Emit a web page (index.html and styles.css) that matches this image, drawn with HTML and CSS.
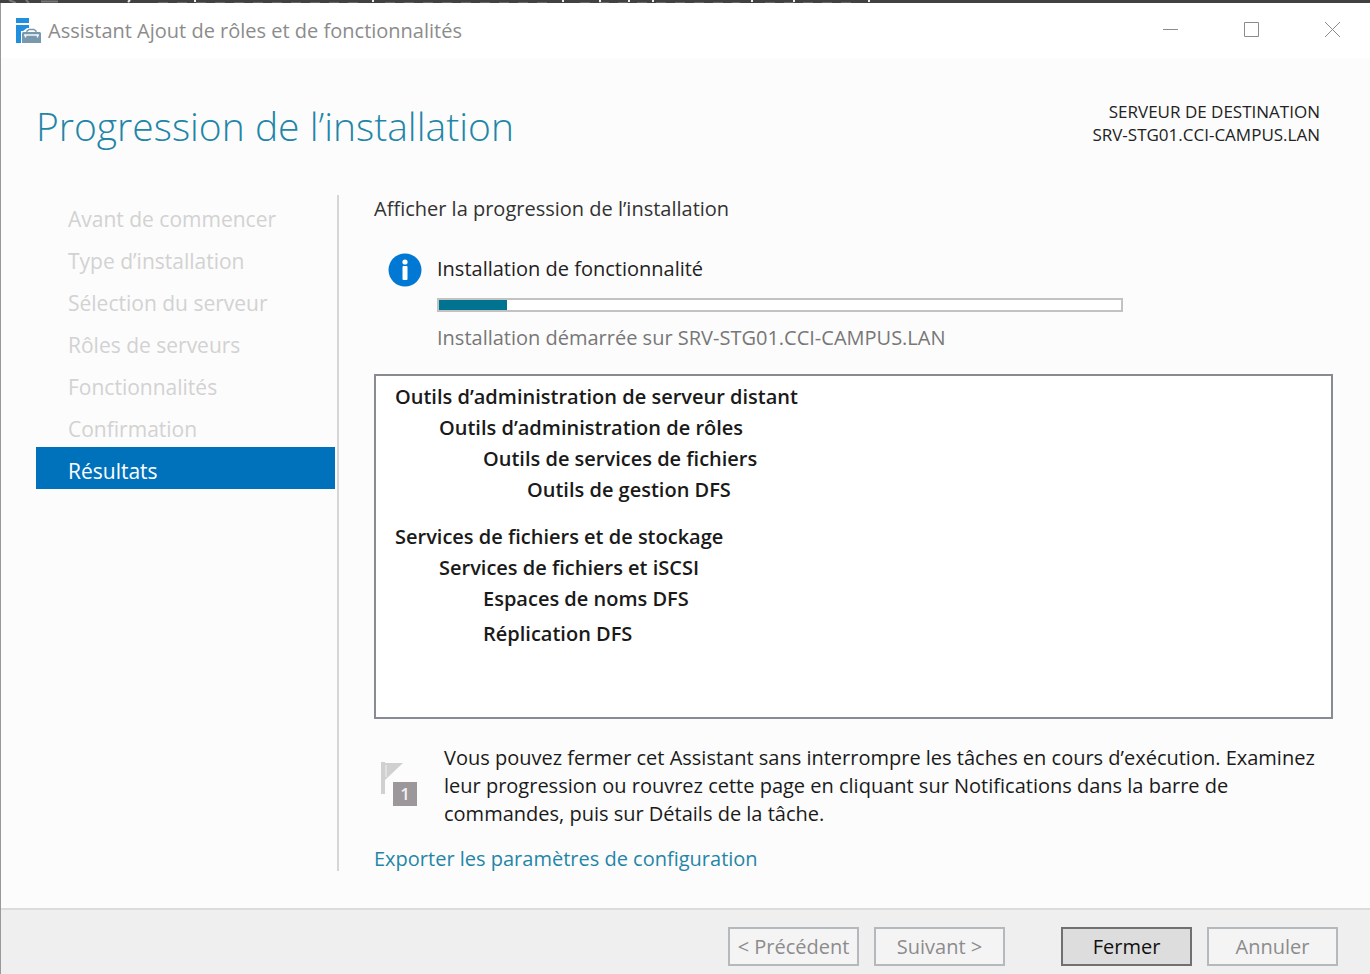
FILE: index.html
```html
<!DOCTYPE html>
<html lang="fr">
<head>
<meta charset="utf-8">
<title>Assistant Ajout de rôles et de fonctionnalités</title>
<link rel="stylesheet" href="styles.css">
</head>
<body>
<div class="backdrop">
  <svg viewBox="0 0 900 3" width="900" height="3" aria-hidden="true">
    <path stroke="#777" stroke-width="2" fill="none" d="M9 0l7 3M26 0l3 3M41 1.500h17"/>
    <path stroke="#666" stroke-width="1" stroke-dasharray="10 9" d="M158 2.500h200M385 2.500h165M580 2.500h160M765 2.500h90"/>
    <path stroke="#e8eef5" stroke-width="2" d="M130 0l-2 2M195 0v2M373 0v2M563 0v2M600 0v2M629 0v2M653 0v2M752 0v2M794 0v2M869 0v2"/>
  </svg>
</div>
<div class="window">
  <header class="titlebar">
    <svg class="app-icon" viewBox="0 0 26 26" width="26" height="26" aria-hidden="true">
      <path fill="#1f8fde" d="M0 0h13v5H0zM0 7h13v3h-2l-4 3H5v12H0z"/>
      <path fill="none" stroke="#7899ad" stroke-width="1.500" d="M11 14v-1l2-1.500h5l2 1.500v1"/>
      <path fill="#7899ad" d="M7 14h17l1 1v10H6V15z"/>
      <path fill="none" stroke="#f4f8fa" stroke-width="1.500" d="M8 17h15M9.500 17v2.500M21.500 17v2.500"/>
    </svg>
    <span class="title">Assistant Ajout de rôles et de fonctionnalités</span>
    <div class="controls">
      <button class="control" aria-label="Réduire"><svg viewBox="0 0 17 17" width="17" height="17"><path d="M1 8.500h15"/></svg></button>
      <button class="control" aria-label="Agrandir"><svg viewBox="0 0 17 17" width="17" height="17"><path d="M1.500 1.500h14v14h-14z"/></svg></button>
      <button class="control" aria-label="Fermer la fenêtre"><svg viewBox="0 0 17 17" width="17" height="17"><path d="M1 1l15 15M16 1L1 16"/></svg></button>
    </div>
  </header>
  <main class="wizard">
    <div class="heading">
      <h1>Progression de l’installation</h1>
      <p class="destination">SERVEUR DE DESTINATION<br>SRV-STG01.CCI-CAMPUS.LAN</p>
    </div>
    <div class="columns">
      <nav class="steps">
        <ol>
          <li>Avant de commencer</li>
          <li>Type d’installation</li>
          <li>Sélection du serveur</li>
          <li>Rôles de serveurs</li>
          <li>Fonctionnalités</li>
          <li>Confirmation</li>
          <li class="current" aria-current="step">Résultats</li>
        </ol>
      </nav>
      <section class="content">
        <h2>Afficher la progression de l’installation</h2>
        <div class="status">
          <svg class="info" viewBox="0 0 34 34" width="34" height="34" aria-hidden="true">
            <circle cx="17" cy="17" r="16.500" fill="#0078d4"/>
            <circle cx="17" cy="9" r="2.600" fill="#fff"/>
            <rect x="14.500" y="13" width="5" height="14" rx="1" fill="#fff"/>
          </svg>
          <div class="status-body">
            <p id="task">Installation de fonctionnalité</p>
            <div class="progress" role="progressbar" aria-labelledby="task" aria-valuenow="10" aria-valuemin="0" aria-valuemax="100"><div class="bar" style="width:10%"></div></div>
            <p class="detail">Installation démarrée sur SRV-STG01.CCI-CAMPUS.LAN</p>
          </div>
        </div>
        <div class="results">
          <ul>
            <li>Outils d’administration de serveur distant
              <ul><li>Outils d’administration de rôles
                <ul><li>Outils de services de fichiers
                  <ul><li>Outils de gestion DFS</li></ul></li></ul></li></ul></li>
            <li>Services de fichiers et de stockage
              <ul><li>Services de fichiers et iSCSI
                <ul><li>Espaces de noms DFS</li><li>Réplication DFS</li></ul></li></ul></li>
          </ul>
        </div>
        <div class="note">
          <svg class="flag" viewBox="0 0 40 46" width="40" height="46" aria-hidden="true">
            <path fill="#d0d0d0" d="M1 1h4v32H1z"/>
            <path fill="#d0d0d0" d="M5 2h18L5 19z"/>
            <path stroke="#f0f0f0" d="M6 4v12"/>
            <rect x="13" y="21" width="24" height="24" fill="#9b979a"/>
            <text class="flag-count" x="25" y="39" text-anchor="middle">1</text>
          </svg>
          <p>Vous pouvez fermer cet Assistant sans interrompre les tâches en cours d’exécution. Examinez leur progression ou rouvrez cette page en cliquant sur Notifications dans la barre de commandes, puis sur Détails de la tâche.</p>
        </div>
        <a class="export" href="#export">Exporter les paramètres de configuration</a>
      </section>
    </div>
  </main>
  <footer class="actions">
    <button class="button" disabled>&lt; Précédent</button>
    <button class="button" disabled>Suivant &gt;</button>
    <button class="button primary">Fermer</button>
    <button class="button" disabled>Annuler</button>
  </footer>
</div>
</body>
</html>
```
FILE: styles.css
```css
* { box-sizing: border-box; }
body {
  margin: 0;
  min-height: 100vh;
  display: flex;
  flex-direction: column;
  font-family: "Open Sans", "Noto Sans", sans-serif;
  font-size: 20px;
  line-height: 28px;
  color: #222;
  background: #fcfcfc;
}
h1, h2, p, ul, ol { margin: 0; padding: 0; }
ul, ol { list-style: none; }
button { font: inherit; }
.backdrop { height: 3px; background: #414141; overflow: hidden; }
.backdrop svg { display: block; }
.window {
  flex: 1;
  display: flex;
  flex-direction: column;
  border-left: 1px solid #999;
}
.titlebar {
  display: flex;
  align-items: center;
  height: 55px;
  padding-left: 15px;
  background: #fff;
  color: #8c8c8c;
}
.app-icon { margin-right: 6px; }
.title { flex: 1; }
.controls { display: flex; margin-right: -3px; }
.control {
  width: 81px;
  height: 53px;
  padding: 0;
  border: 0;
  background: none;
  display: grid;
  place-items: center;
}
.controls { align-self: flex-start; }
.control path { fill: none; stroke: #8c8c8c; stroke-width: 1; }
.wizard { flex: 1; padding: 38px 37px 35px 35px; }
.heading {
  display: flex;
  justify-content: space-between;
  align-items: flex-start;
  height: 99px;
  padding-right: 13px;
}
h1 { font-size: 39px; font-weight: 300; line-height: 60px; color: #1f86a8; }
.destination { padding-top: 4px; font-size: 17px; line-height: 23px; text-align: right; }
.columns { display: flex; }
.steps {
  flex: 0 0 303px;
  height: 676px;
  padding-right: 2px;
  border-right: 2px solid #d6d6d6;
}
.steps li { padding: 6px 0 0 32px; line-height: 36px; color: #d2d2d2; font-size: 21px; }
.steps .current { background: #0072bc; color: #fff; }
.content { flex: 1; min-width: 0; padding-left: 35px; }
h2 { font-size: 20px; font-weight: 400; line-height: 28px; color: #333; }
.status { display: flex; align-items: flex-start; padding: 30px 210px 0 14px; }
.info { margin-right: 15px; }
.status-body { flex: 1; padding-top: 2px; }
.progress { height: 14px; margin: 15px 0 12px; border: 2px solid #c2c2c2; background: #fff; }
.bar { height: 10px; background: #007391; }
.detail { color: #777; }
.results {
  min-height: 345px;
  margin-top: 22px;
  padding: 5px 19px;
  border: 2px solid #888b94;
  background: #fff;
  font-weight: 600;
  line-height: 31px;
  color: #1a1a1a;
}
.results ul ul { padding-left: 44px; }
.results > ul > li + li { margin-top: 16px; }
.results li li li + li { margin-top: 4px; }
.note { display: flex; padding-top: 25px; color: #1a1a1a; }
.flag { flex: none; margin: 17px 24px 0 6px; }
.flag-count { font-size: 17px; font-weight: 600; fill: #f0f0f0; }
.export { display: inline-block; margin-top: 17px; color: #1f86a8; text-decoration: none; }
.actions {
  display: flex;
  justify-content: flex-end;
  gap: 15px;
  padding: 17px 32px 10px;
  border-top: 2px solid #dcdcdc;
  background: #efefef;
}
.button {
  width: 131px;
  height: 39px;
  padding: 0;
  border: 2px solid #b4b9bd;
  background: #f4f4f4;
  color: #8c8c8c;
}
.primary { margin-left: 41px; border-color: #707070; background: #ddd; color: #111; }
```
